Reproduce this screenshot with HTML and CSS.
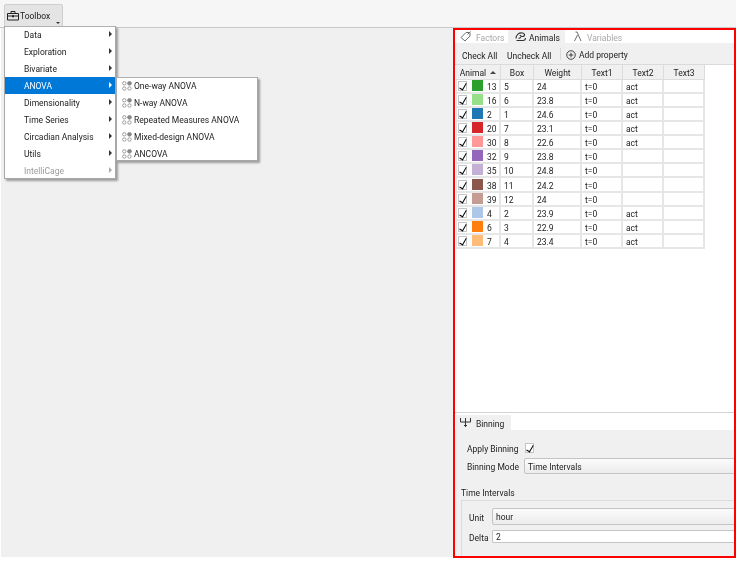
FILE: index.html
```html
<!DOCTYPE html>
<html lang="en">
<head>
<meta charset="utf-8">
<title>Toolbox</title>
<link rel="stylesheet" href="styles.css">
</head>
<body>
<div class="window">
  <header class="topbar">
    <button class="toolbox-btn">
      <svg class="ico-case" viewBox="0 0 12 11" width="12" height="11"><path d="M.5 3.500h11v6.500H.5zM4 3.500V1.500h4v2M.5 6h11M5.500 5.500h1v1.500h-1z" fill="none" stroke="#222" stroke-width="1"/></svg>
      <span>Toolbox</span>
      <i class="btn-arrow"></i>
    </button>
  </header>
  <main class="workspace">
    <div class="canvas"></div>
    <section class="panel">
      <nav class="tabs">
        <div class="tab off first">
          <svg width="12" height="11" viewBox="0 0 12 11"><path d="M1 6.500 6 1.500h4v3.500l-5 5zM7.500 3.500 10.500 .5" fill="none" stroke="#555" stroke-width="1"/></svg>
          <span>Factors</span>
        </div>
        <div class="tab on">
          <svg width="11" height="11" viewBox="0 0 11 11"><path d="M1 7.500C1 3.500 4 1.500 7.500 2c2 .3 2.500 2 1.500 3C8 6 5.500 5.500 5 4M1.500 9.500h6.500c1.500 0 2.500-1 2.500-2.500M3.500 7.500 6 6.500" fill="none" stroke="#333" stroke-width="1.100"/></svg>
          <span>Animals</span>
        </div>
        <div class="tab off last">
          <svg width="8" height="11" viewBox="0 0 8 11"><path d="M.5 10 3.500 4M1.500 1h1.500l4 9" fill="none" stroke="#555" stroke-width="1"/></svg>
          <span>Variables</span>
        </div>
      </nav>
      <div class="actions">
        <span class="action check">Check All</span>
        <span class="action uncheck">Uncheck All</span>
        <span class="sep"></span>
        <span class="action add">
          <svg width="10" height="10" viewBox="0 0 11 11"><circle cx="5.500" cy="5.500" r="4.700" fill="none" stroke="#333"/><path d="M5.500 3v5M3 5.500h5" stroke="#333"/></svg>
          Add property
        </span>
      </div>
      <div class="table-area">
        <table class="grid">
          <colgroup>
            <col class="c-animal"><col class="c-box"><col class="c-weight"><col class="c-t1"><col class="c-t2"><col class="c-t3">
          </colgroup>
          <thead>
            <tr><th>Animal <i class="sort"></i></th><th>Box</th><th>Weight</th><th>Text1</th><th>Text2</th><th>Text3</th></tr>
          </thead>
          <tbody>
            <tr><td class="an"><i class="chk"></i><i class="sw s1"></i><b>13</b></td><td>5</td><td>24</td><td>t=0</td><td>act</td><td></td></tr>
            <tr><td class="an"><i class="chk"></i><i class="sw s2"></i><b>16</b></td><td>6</td><td>23.8</td><td>t=0</td><td>act</td><td></td></tr>
            <tr><td class="an"><i class="chk"></i><i class="sw s3"></i><b>2</b></td><td>1</td><td>24.6</td><td>t=0</td><td>act</td><td></td></tr>
            <tr><td class="an"><i class="chk"></i><i class="sw s4"></i><b>20</b></td><td>7</td><td>23.1</td><td>t=0</td><td>act</td><td></td></tr>
            <tr><td class="an"><i class="chk"></i><i class="sw s5"></i><b>30</b></td><td>8</td><td>22.6</td><td>t=0</td><td>act</td><td></td></tr>
            <tr><td class="an"><i class="chk"></i><i class="sw s6"></i><b>32</b></td><td>9</td><td>23.8</td><td>t=0</td><td></td><td></td></tr>
            <tr><td class="an"><i class="chk"></i><i class="sw s7"></i><b>35</b></td><td>10</td><td>24.8</td><td>t=0</td><td></td><td></td></tr>
            <tr><td class="an"><i class="chk"></i><i class="sw s8"></i><b>38</b></td><td>11</td><td>24.2</td><td>t=0</td><td></td><td></td></tr>
            <tr><td class="an"><i class="chk"></i><i class="sw s9"></i><b>39</b></td><td>12</td><td>24</td><td>t=0</td><td></td><td></td></tr>
            <tr><td class="an"><i class="chk"></i><i class="sw s10"></i><b>4</b></td><td>2</td><td>23.9</td><td>t=0</td><td>act</td><td></td></tr>
            <tr><td class="an"><i class="chk"></i><i class="sw s11"></i><b>6</b></td><td>3</td><td>22.9</td><td>t=0</td><td>act</td><td></td></tr>
            <tr><td class="an"><i class="chk"></i><i class="sw s12"></i><b>7</b></td><td>4</td><td>23.4</td><td>t=0</td><td>act</td><td></td></tr>
          </tbody>
        </table>
      </div>
      <div class="binning">
        <div class="bin-tabs">
          <div class="bin-tab">
            <svg width="11" height="11" viewBox="0 0 11 11"><path d="M.5 1v4h10V1M5.500 1v9M4 8.500h3" fill="none" stroke="#333" stroke-width="1"/></svg>
            <span>Binning</span>
          </div>
        </div>
        <div class="bin-body">
          <div class="form-row apply"><span class="lbl">Apply Binning</span><i class="chk"></i></div>
          <div class="form-row mode"><span class="lbl">Binning Mode</span><div class="combo">Time Intervals</div></div>
          <div class="group-title">Time Intervals</div>
          <div class="group">
            <div class="form-row unit"><span class="lbl g">Unit</span><div class="combo tall">hour</div></div>
            <div class="form-row delta"><span class="lbl g">Delta</span><div class="input">2</div></div>
          </div>
        </div>
      </div>
    </section>
  </main>

  <div class="menu main-menu">
    <div class="mi">Data<i class="arr"></i></div>
    <div class="mi">Exploration<i class="arr"></i></div>
    <div class="mi">Bivariate<i class="arr"></i></div>
    <div class="mi active">ANOVA<i class="arr"></i></div>
    <div class="mi">Dimensionality<i class="arr"></i></div>
    <div class="mi">Time Series<i class="arr"></i></div>
    <div class="mi">Circadian Analysis<i class="arr"></i></div>
    <div class="mi">Utils<i class="arr"></i></div>
    <div class="mi dis">IntelliCage<i class="arr"></i></div>
  </div>
  <div class="menu sub-menu">
    <div class="si"><svg class="ci" width="10" height="10" viewBox="0 0 10 10"><circle cx="2.300" cy="2.300" r="1.700"/><circle class="f" cx="7.500" cy="2.300" r="1.900"/><circle cx="2.300" cy="7.500" r="1.700"/><circle cx="7.500" cy="7.500" r="1.700"/></svg>One-way ANOVA</div>
    <div class="si"><svg class="ci" width="10" height="10" viewBox="0 0 10 10"><circle cx="2.300" cy="2.300" r="1.700"/><circle class="f" cx="7.500" cy="2.300" r="1.900"/><circle cx="2.300" cy="7.500" r="1.700"/><circle cx="7.500" cy="7.500" r="1.700"/></svg>N-way ANOVA</div>
    <div class="si"><svg class="ci" width="10" height="10" viewBox="0 0 10 10"><circle cx="2.300" cy="2.300" r="1.700"/><circle class="f" cx="7.500" cy="2.300" r="1.900"/><circle cx="2.300" cy="7.500" r="1.700"/><circle cx="7.500" cy="7.500" r="1.700"/></svg>Repeated Measures ANOVA</div>
    <div class="si"><svg class="ci" width="10" height="10" viewBox="0 0 10 10"><circle cx="2.300" cy="2.300" r="1.700"/><circle class="f" cx="7.500" cy="2.300" r="1.900"/><circle cx="2.300" cy="7.500" r="1.700"/><circle cx="7.500" cy="7.500" r="1.700"/></svg>Mixed-design ANOVA</div>
    <div class="si"><svg class="ci" width="10" height="10" viewBox="0 0 10 10"><circle cx="2.300" cy="2.300" r="1.700"/><circle class="f" cx="7.500" cy="2.300" r="1.900"/><circle cx="2.300" cy="7.500" r="1.700"/><circle cx="7.500" cy="7.500" r="1.700"/></svg>ANCOVA</div>
  </div>
</div>
</body>
</html>
```
FILE: styles.css
```css
* { box-sizing: border-box; }
html, body { margin: 0; padding: 0; background: #fff; }
body {
  width: 744px;
  height: 568px;
  overflow: hidden;
  font-family: Roboto, "Noto Sans", sans-serif;
  font-size: 8.5px;
  color: #222;
}
.window { position: relative; width: 736px; height: 558px; display: flex; flex-direction: column; }

/* soft edges as in the reference capture */
.topbar, .tabs, .actions, .table-area, .binning, .menu { filter: blur(.3px); }

/* top bar */
.topbar {
  height: 28px;
  flex: none;
  background: #f6f6f6;
  border-bottom: 1px solid #c9c9c9;
  padding: 4px 0 0 4px;
}
.toolbox-btn {
  position: relative;
  display: flex;
  align-items: center;
  gap: 1px;
  width: 59px;
  height: 23px;
  padding: 0 0 0 2px;
  font: inherit;
  color: #222;
  background: #e4e4e4;
  border: 1px solid #cfcfcf;
  border-radius: 2px;
}
.btn-arrow {
  position: absolute;
  right: 2px;
  bottom: 2px;
  border: 2px solid transparent;
  border-top: 2px solid #333;
  border-bottom: 0;
}

/* workspace */
.workspace { flex: 1; min-height: 0; display: flex; padding-left: 1px; }
.canvas { flex: 1; background: #f0f0f0; height: 529px; }

/* panel */
.panel {
  width: 283px;
  flex: none;
  border: 2px solid #f00;
  overflow: hidden;
  display: flex;
  flex-direction: column;
  background: #fff;
}
.tabs { height: 13px; flex: none; display: flex; background: #fff; padding-left: 2px; }
.tab { display: flex; align-items: center; height: 13px; padding-top: 2px; }
.tab svg { margin-top: -2px; }
.tab.first { gap: 4px; padding-left: 3px; width: 51px; }
.tab.on { background: #f0f0f0; color: #222; gap: 3px; padding-left: 7px; width: 57px; }
.tab.last { gap: 5px; padding-left: 9px; }
.tab.off { color: #a8a8a8; }
.tab.off svg { opacity: .85; }
.actions {
  height: 22px;
  flex: none;
  background: #f0f0f0;
  border-bottom: 1px solid #dadada;
  display: flex;
  align-items: center;
  padding: 5px 0 0 7px;
}
.check { width: 45px; }
.uncheck { width: 53px; }
.sep { width: 1px; height: 12px; background: #d8d8d8; margin: -4px 5px 0 0; }
.add { display: flex; align-items: center; gap: 3px; margin-top: -3px; }

.table-area { flex: 1; min-height: 0; background: #fff; padding-left: 1px; }
.grid { border-collapse: separate; border-spacing: 0; table-layout: fixed; width: 249px; }
.c-animal { width: 45px; } .c-box { width: 33px; } .c-weight { width: 48px; }
.c-t1 { width: 41px; } .c-t2 { width: 41px; } .c-t3 { width: 41px; }
.grid th {
  font-weight: 400;
  padding: 3px 0 0;
  background: #f0f0f0;
  border-right: 1px solid #dcdcdc;
  border-bottom: 1px solid #dcdcdc;
  text-align: center;
  white-space: nowrap;
  height: 14.5px;
  line-height: 10px;
}
.grid td {
  padding: 3px 0 0 3px;
  height: 14.15px;
  line-height: 9px;
  border-right: 2px solid #e6e6e6;
  border-bottom: 2px solid #e6e6e6;
  white-space: nowrap;
}
.grid td:first-child { border-left: 1px solid #e6e6e6; }
.grid td.an { padding: 0 0 0 1px; }
.an > * { vertical-align: top; }
.an .chk { margin: 1px 5px 0 0; }
.an b { display: inline-block; width: 12px; margin: 3px 0 0 4px; font-weight: 400; text-align: left; }
.sort {
  display: inline-block;
  vertical-align: 2px;
  margin-left: 2px;
  border: 3px solid transparent;
  border-bottom: 3px solid #444;
  border-top: 0;
}
.chk {
  display: inline-block;
  position: relative;
  width: 9px;
  height: 10px;
  background: #fff;
  border: 1px solid #c4c4c4;
}
.chk::after {
  content: "";
  position: absolute;
  left: 2px;
  top: 0;
  width: 3px;
  height: 7px;
  border-right: 1.600px solid #000;
  border-bottom: 1.600px solid #000;
  transform: rotate(30deg);
}
.sw { display: inline-block; width: 11px; height: 11px; }
.s1 { background: #2ca02c; } .s2 { background: #98df8a; } .s3 { background: #1f77b4; }
.s4 { background: #d62728; } .s5 { background: #ff9896; } .s6 { background: #9467bd; }
.s7 { background: #c5b0d5; } .s8 { background: #8c564b; } .s9 { background: #c49c94; }
.s10 { background: #aec7e8; } .s11 { background: #ff7f0e; } .s12 { background: #ffbb78; }

/* binning */
.binning { flex: none; height: 144px; border-top: 1px solid #d4d4d4; display: flex; flex-direction: column; padding-top: 2px; background: #fff; }
.bin-tabs { height: 15px; flex: none; display: flex; padding-left: 1px; }
.bin-tab { display: flex; align-items: center; gap: 5px; background: #f0f0f0; width: 55px; height: 15px; padding-left: 4px; }
.bin-tab span { padding-top: 2px; }
.bin-body { flex: 1; background: #f0f0f0; padding: 11px 0 0 6px; overflow: hidden; }
.form-row { display: flex; align-items: center; }
.lbl { white-space: nowrap; flex: none; padding-top: 2px; }
.apply { padding-left: 6px; height: 14px; }
.apply .lbl { width: 58px; }
.mode { padding-left: 6px; margin-top: 3px; height: 16px; }
.mode .lbl { width: 57px; }
.combo, .input { flex: none; width: 260px; white-space: nowrap; padding-left: 3px; }
.combo {
  height: 16px;
  line-height: 16px;
  background: linear-gradient(#fbfbfb, #ececec);
  border: 1px solid #c4c4c4;
  border-radius: 2px;
}
.combo.tall { height: 17px; line-height: 17px; }
.input { height: 13px; line-height: 12px; background: #fff; border: 1px solid #c4c4c4; border-radius: 1px; }
.group-title { margin-top: 12px; height: 14px; line-height: 14px; }
.group { border: 1px solid #dcdcdc; border-right: 0; height: 60px; padding: 7px 0 0 7px; }
.g { width: 23px; }
.delta { margin-top: 5px; }

/* menus */
.menu {
  position: absolute;
  background: #fff;
  border-left: 1px solid #a8a8a8;
  border-right: 1px solid #a8a8a8;
  box-shadow: inset 0 1px #b0b0b0, inset 0 -1px #a8a8a8, 2px 2px 2px rgba(0,0,0,.35);
}
.main-menu { left: 4px; top: 26px; width: 112px; height: 153px; }
.sub-menu { left: 116px; top: 77px; width: 142px; height: 84px; }
.mi, .si { height: 17px; line-height: 18px; white-space: nowrap; position: relative; }
.main-menu .mi { padding-left: 19px; }
.mi.active { background: #0078d7; color: #fff; }
.mi.dis { color: #9a9a9a; }
.arr {
  position: absolute;
  right: 3px;
  top: 5px;
  border: 3px solid transparent;
  border-left: 3px solid #333;
  border-right: 0;
}
.mi.active .arr { border-left-color: #fff; }
.mi.dis .arr { border-left-color: #aaa; }
.si { display: flex; align-items: center; gap: 2px; padding-left: 5px; }
.ci circle { fill: none; stroke: #888; stroke-width: .8; }
.ci circle.f { fill: #888; }
```
